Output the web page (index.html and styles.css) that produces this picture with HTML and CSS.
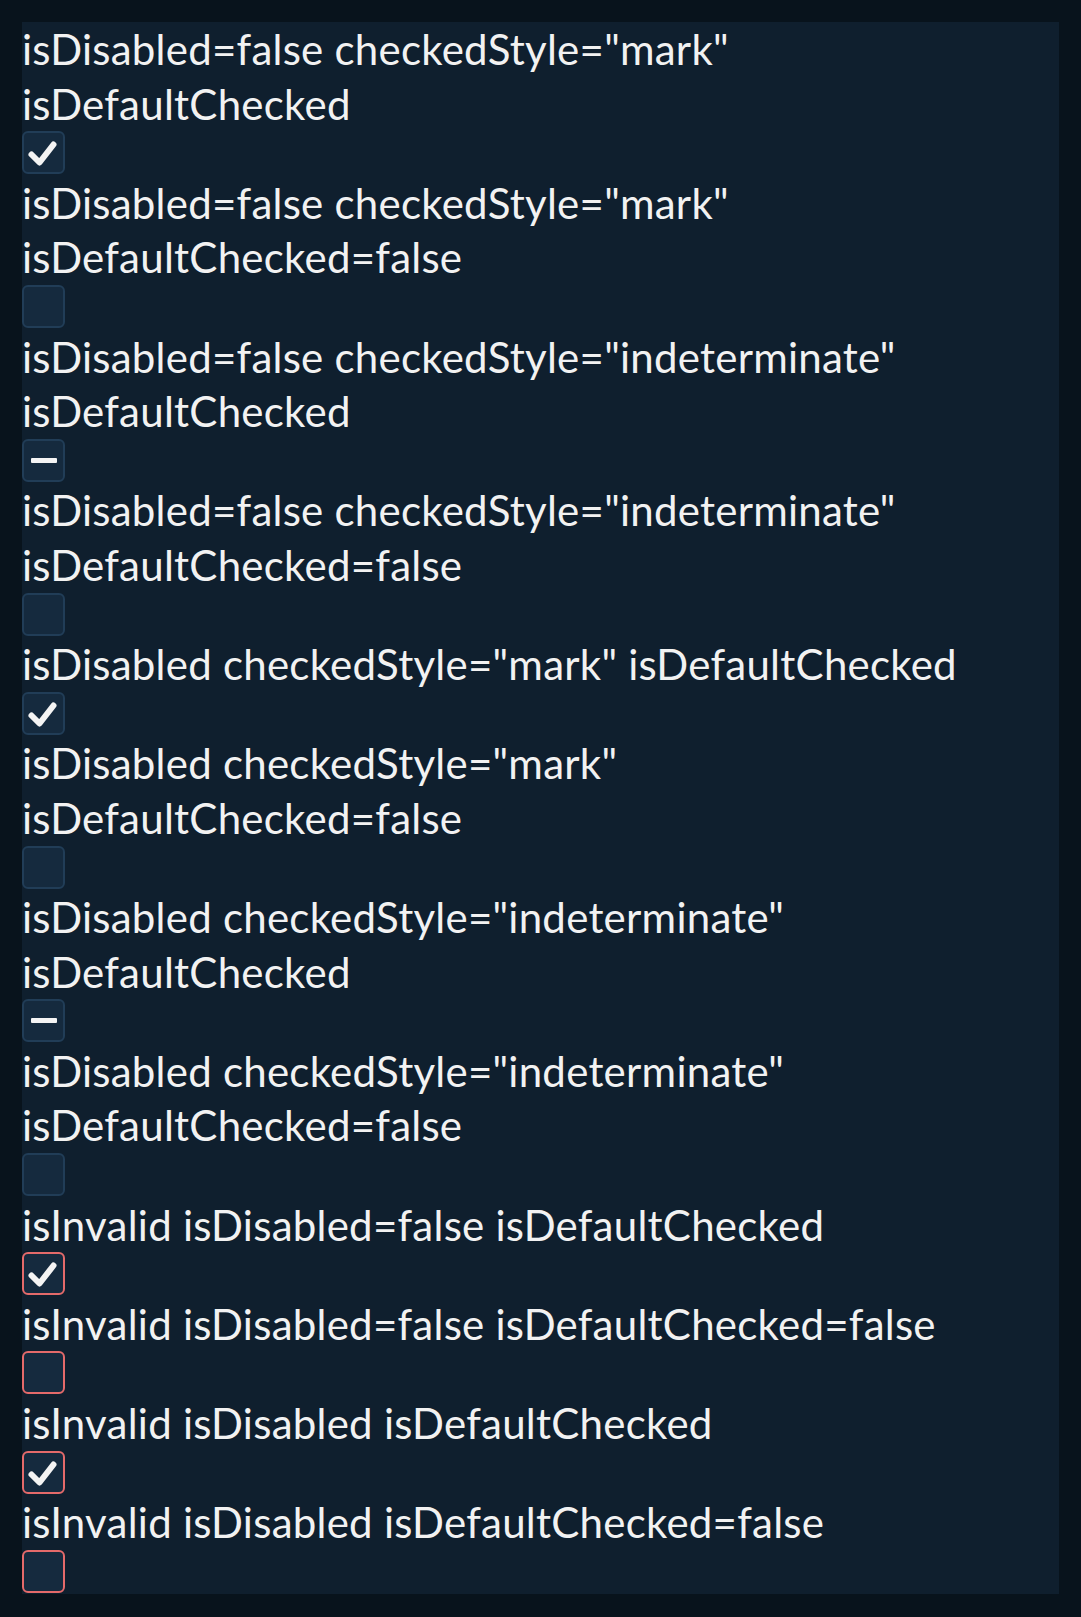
FILE: index.html
```html
<!DOCTYPE html>
<html>
<head>
<meta charset="utf-8">
<link rel="stylesheet" href="styles.css">
</head>
<body>
<div class="panel">
  <div class="row"><div class="label">isDisabled=false checkedStyle="mark" isDefaultChecked</div><div class="cb-wrap"><span class="cb"><svg class="mark" viewBox="0 0 43 43"><path d="M9.5 23.5 L17.5 31.5 L31.5 13.5"/></svg></span></div></div>
  <div class="row"><div class="label">isDisabled=false checkedStyle="mark" isDefaultChecked=false</div><div class="cb-wrap"><span class="cb"></span></div></div>
  <div class="row"><div class="label">isDisabled=false checkedStyle="indeterminate" isDefaultChecked</div><div class="cb-wrap"><span class="cb"><span class="minus"></span></span></div></div>
  <div class="row"><div class="label">isDisabled=false checkedStyle="indeterminate" isDefaultChecked=false</div><div class="cb-wrap"><span class="cb"></span></div></div>
  <div class="row"><div class="label">isDisabled checkedStyle="mark" isDefaultChecked</div><div class="cb-wrap"><span class="cb"><svg class="mark" viewBox="0 0 43 43"><path d="M9.5 23.5 L17.5 31.5 L31.5 13.5"/></svg></span></div></div>
  <div class="row"><div class="label">isDisabled checkedStyle="mark" isDefaultChecked=false</div><div class="cb-wrap"><span class="cb"></span></div></div>
  <div class="row"><div class="label">isDisabled checkedStyle="indeterminate" isDefaultChecked</div><div class="cb-wrap"><span class="cb"><span class="minus"></span></span></div></div>
  <div class="row"><div class="label">isDisabled checkedStyle="indeterminate" isDefaultChecked=false</div><div class="cb-wrap"><span class="cb"></span></div></div>
  <div class="row"><div class="label">isInvalid isDisabled=false isDefaultChecked</div><div class="cb-wrap"><span class="cb invalid"><svg class="mark" viewBox="0 0 43 43"><path d="M9.5 23.5 L17.5 31.5 L31.5 13.5"/></svg></span></div></div>
  <div class="row"><div class="label">isInvalid isDisabled=false isDefaultChecked=false</div><div class="cb-wrap"><span class="cb invalid"></span></div></div>
  <div class="row"><div class="label">isInvalid isDisabled isDefaultChecked</div><div class="cb-wrap"><span class="cb invalid"><svg class="mark" viewBox="0 0 43 43"><path d="M9.5 23.5 L17.5 31.5 L31.5 13.5"/></svg></span></div></div>
  <div class="row"><div class="label">isInvalid isDisabled isDefaultChecked=false</div><div class="cb-wrap"><span class="cb invalid"></span></div></div>
</div>
</body>
</html>
```
FILE: styles.css
```css
html, body {
  margin: 0;
  padding: 0;
  background: #08131c;
}
body {
  padding: 22px;
}
.panel {
  background: #0f1f2e;
  color: #f2f2f2;
  font-family: Lato, "Open Sans", sans-serif;
  font-size: 42px;
  line-height: 54.6px;
  letter-spacing: 0.25px;
}
.label {
  padding-right: 90px;
}
.cb-wrap {
  height: 44.6px;
}
.cb {
  box-sizing: border-box;
  display: flex;
  align-items: center;
  justify-content: center;
  width: 43px;
  height: 43px;
  border: 2px solid #213d57;
  border-radius: 6px;
  background: #152a3e;
  position: relative;
}
.cb.invalid {
  border-color: #e46a6a;
}
.mark {
  position: absolute;
  left: -2px;
  top: -2px;
  width: 43px;
  height: 43px;
}
.mark path {
  fill: none;
  stroke: #f4f4f4;
  stroke-width: 6;
  stroke-linecap: round;
  stroke-linejoin: round;
}
.minus {
  width: 26px;
  height: 5px;
  border-radius: 1px;
  background: #f4f4f4;
}
```
